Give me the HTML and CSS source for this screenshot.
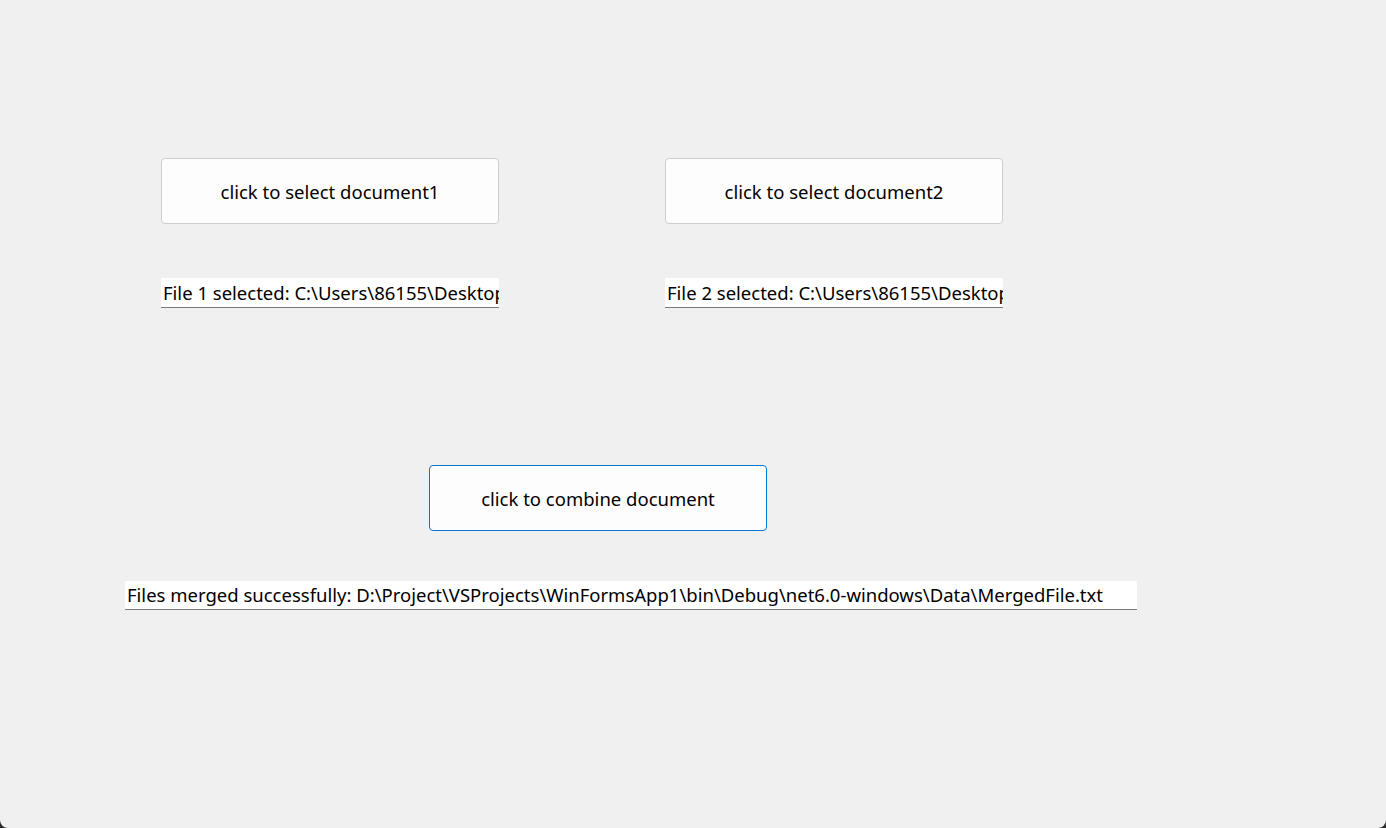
FILE: index.html
```html
<!DOCTYPE html>
<html>
<head>
<meta charset="utf-8">
<link rel="stylesheet" href="styles.css">
</head>
<body>
<div class="window">
  <div class="row row-select">
    <button class="btn">click to select document1</button>
    <button class="btn">click to select document2</button>
  </div>
  <div class="row row-files">
    <div class="textbox">File 1 selected: C:\Users\86155\Desktop</div>
    <div class="textbox">File 2 selected: C:\Users\86155\Desktop</div>
  </div>
  <div class="row row-combine">
    <button class="btn btn-primary">click to combine document</button>
  </div>
  <div class="row row-result">
    <div class="textbox textbox-wide">Files merged successfully: D:\Project\VSProjects\WinFormsApp1\bin\Debug\net6.0-windows\Data\MergedFile.txt</div>
  </div>
</div>
</body>
</html>
```

FILE: styles.css
```css
html, body {
  margin: 0;
  padding: 0;
  background: #2b2b2b;
}
.window {
  width: 1386px;
  height: 828px;
  background: #f0f0f0;
  border-radius: 0 0 8px 8px;
  box-sizing: border-box;
  padding-top: 158px;
  font-family: "Noto Sans", "Noto Sans CJK SC", sans-serif;
  font-size: 18.5px;
  color: #000;
  overflow: hidden;
}
.row {
  display: flex;
}
.row-select {
  padding-left: 161px;
  gap: 166px;
}
.btn {
  width: 338px;
  height: 66px;
  box-sizing: border-box;
  background: #fdfdfd;
  border: 1px solid #cdcdcd;
  border-radius: 4px;
  font-family: inherit;
  font-size: 18.5px;
  color: #000;
  padding: 0;
}
.btn-primary {
  border-color: #0a74cf;
}
.row-files {
  margin-top: 54px;
  padding-left: 161px;
  gap: 166px;
}
.textbox {
  width: 338px;
  height: 30px;
  box-sizing: border-box;
  background: #fff;
  border-bottom: 1px solid #7a7a7a;
  padding-left: 2px;
  line-height: 29px;
  white-space: nowrap;
  overflow: hidden;
}
.row-combine {
  margin-top: 157px;
  padding-left: 429px;
}
.row-result {
  margin-top: 50px;
  padding-left: 125px;
}
.textbox-wide {
  width: 1012px;
  height: 29px;
  line-height: 28px;
}
```
